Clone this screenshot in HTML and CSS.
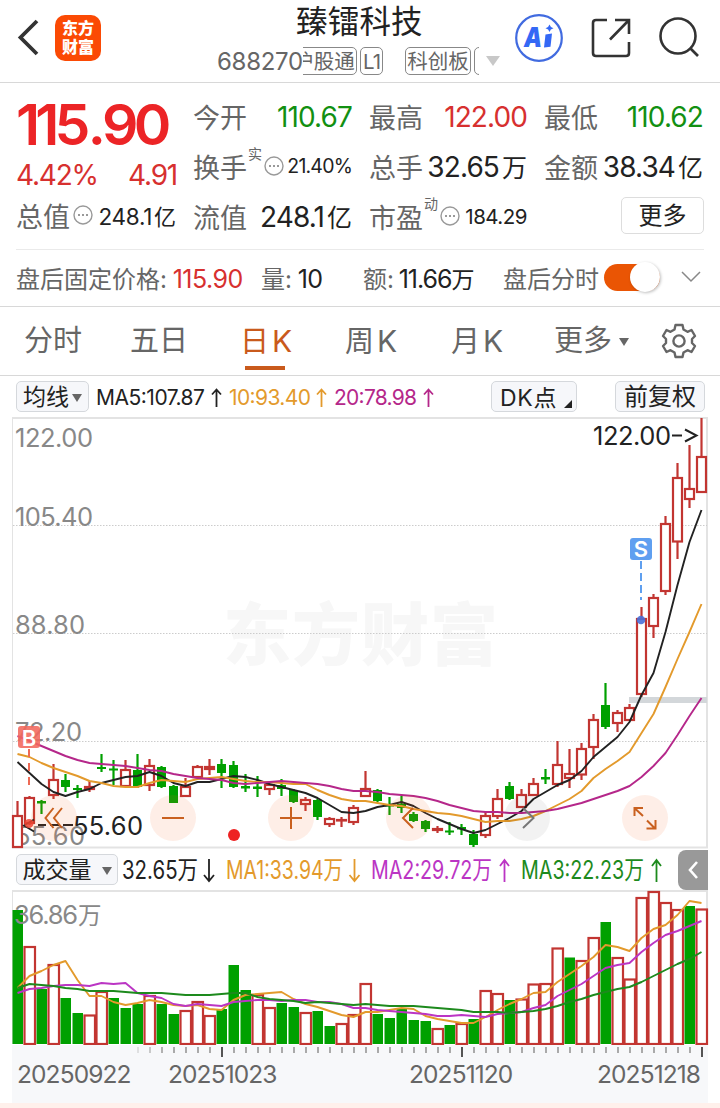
FILE: index.html
```html
<!DOCTYPE html>
<html lang="zh-CN">
<head>
  <meta charset="UTF-8">
  <title>臻镭科技 688270</title>
  <link rel="stylesheet" href="styles.css">
</head>
<body>
  <!-- 顶部导航 -->
  <header class="app-header">
    <svg class="back" width="24" height="40" viewBox="0 0 24 40"><path d="M21 4 L4.500 20.500 L21 37" fill="none" stroke="#333" stroke-width="3.800"/></svg>
    <div class="logo"><span>东方</span><span>财富</span></div>
    <div class="stock">
      <div class="stock-name">臻镭科技</div>
      <div class="stock-sub">
        <span class="stock-code">688270</span>
        <div class="badges">
          <span class="badge first">沪股通</span>
          <span class="badge l1">L1</span>
          <span class="badge board">科创板</span>
          <span class="badge last">融</span>
        </div>
        <span class="tri-light"></span>
      </div>
    </div>
    <div class="header-icons">
      <svg width="50" height="50" viewBox="0 0 50 50">
        <circle cx="25" cy="25" r="22.800" fill="none" stroke="#416be0" stroke-width="2.200"/>
        <text x="10" y="34" class="ai-text" textLength="18" lengthAdjust="spacingAndGlyphs">A</text>
        <path d="M31.500 21.500 L38 20.500 L36.500 33.800 L30 34.500 Z" fill="#3468f5"/>
        <path d="M35.500 11.500 Q36.200 14.300 39.500 15.200 Q36.200 16 35.500 19 Q34.800 16 31.500 15.200 Q34.800 14.300 35.500 11.500 Z" fill="#3468f5"/>
      </svg>
      <svg width="42" height="42" viewBox="0 0 42 42" fill="none" stroke="#333" stroke-width="2.600">
        <path d="M17 3 H6 Q3 3 3 6 V36 Q3 39 6 39 H36 Q39 39 39 36 V25"/>
        <path d="M25 3 H39 V17 M38 4 L20 22.500"/>
      </svg>
      <svg width="42" height="42" viewBox="0 0 42 42" fill="none" stroke="#333" stroke-width="2.600">
        <circle cx="20" cy="19" r="17.500"/>
        <path d="M32 31 L40 39"/>
      </svg>
    </div>
  </header>

  <!-- 行情数据 -->
  <section class="quote">
    <div class="quote-main">
      <div class="price">115<span class="dot">.</span>90</div>
      <div class="change"><span>4.42%</span><span>4.91</span></div>
      <div class="cell last-row"><label>总值</label><svg class="dots" viewBox="0 0 20 20"><circle cx="10" cy="10" r="9"/><path d="M5 10h2M9 10h2M13 10h2"/></svg><span class="val small">248.1<i>亿</i></span></div>
    </div>
    <div class="quote-grid">
      <div class="cell"><label>今开</label><span class="val green">110.67</span></div>
      <div class="cell"><label>最高</label><span class="val red">122.00</span></div>
      <div class="cell"><label>最低</label><span class="val green">110.62</span></div>
      <div class="cell"><label>换手<sup>实</sup></label><svg class="dots" viewBox="0 0 20 20"><circle cx="10" cy="10" r="9"/><path d="M5 10h2M9 10h2M13 10h2"/></svg><span class="val tiny rate">21.40%</span></div>
      <div class="cell"><label>总手</label><span class="val">32.65<i>万</i></span></div>
      <div class="cell"><label>金额</label><span class="val">38.34<i>亿</i></span></div>
      <div class="cell"><label>流值</label><span class="val">248.1<i>亿</i></span></div>
      <div class="cell"><label>市盈<sup>动</sup></label><svg class="dots" viewBox="0 0 20 20"><circle cx="10" cy="10" r="9"/><path d="M5 10h2M9 10h2M13 10h2"/></svg><span class="val tiny">184.29</span></div>
      <div class="cell"><button class="more-btn">更多</button></div>
    </div>
  </section>

  <!-- 盘后固定价格 -->
  <section class="after">
    <span class="after-price">盘后固定价格: <b class="red">115.90</b></span>
    <span class="after-vol">量: <b>10</b></span>
    <span class="after-amt">额: <b>11.66<i>万</i></b></span>
    <span class="after-label">盘后分时</span>
    <span class="toggle"><span class="knob"></span></span>
    <svg width="20" height="12" viewBox="0 0 20 12"><path d="M1 1 L10 10 L19 1" fill="none" stroke="#888" stroke-width="1.500"/></svg>
  </section>

  <!-- 周期切换 -->
  <nav class="tabs">
    <span class="tab">分时</span>
    <span class="tab">五日</span>
    <span class="tab active">日<em>K</em></span>
    <span class="tab k">周<em>K</em></span>
    <span class="tab k">月<em>K</em></span>
    <span class="tab more">更多<span class="tri"></span></span>
    <svg class="gear" width="36" height="36" viewBox="0 0 36 36" fill="none" stroke="#666" stroke-width="2.400" stroke-linejoin="round">
      <path d="M14.500 2 H21.500 L22.500 6.500 L26.500 8.800 L30.500 7 L34 13 L31 16 V20 L34 23 L30.500 29 L26.500 27.200 L22.500 29.500 L21.500 34 H14.500 L13.500 29.500 L9.500 27.200 L5.500 29 L2 23 L5 20 V16 L2 13 L5.500 7 L9.500 8.800 L13.500 6.500 Z"/>
      <circle cx="18" cy="18" r="5.600"/>
    </svg>
  </nav>

  <!-- 均线 -->
  <div class="legend ma-legend">
    <button class="chip ma-chip">均线<span class="tri"></span></button>
    <svg class="ma-text" width="350" height="40" viewBox="92 377 350 40">
      <g class="num">
        <text x="96" y="405" textLength="109" fill="#222">MA5:107.87</text>
        <text x="229" y="405" textLength="82" fill="#e39a2c">10:93.40</text>
        <text x="334" y="405" textLength="83" fill="#b5278a">20:78.98</text>
      </g>
      <g fill="none" stroke-width="1.800">
        <path d="M216.500 407 V389.500 M212 394.500 L216.500 389.500 L221 394.500" stroke="#222"/>
        <path d="M321.500 407 V389.500 M317 394.500 L321.500 389.500 L326 394.500" stroke="#e39a2c"/>
        <path d="M428.500 407 V389.500 M424 394.500 L428.500 389.500 L433 394.500" stroke="#b5278a"/>
      </g>
    </svg>
    <button class="chip dk-chip">DK点<span class="corner"></span></button>
    <button class="chip fq-chip">前复权</button>
  </div>

  <!-- K线图 -->
  <svg class="chart" width="720" height="432" viewBox="0 417 720 432">
    <text class="watermark" x="223" y="660" textLength="275">东方财富</text>
    <path class="frame" d="M12 418 H708 M12 847.500 H708 M707 418 V848"/>
    <path class="frame thin" d="M12.500 418 V848"/>
    <path class="grid-line" d="M13 525.500 H707 M13 633.500 H707 M13 741.500 H707"/>
    <rect x="629" y="697" width="78" height="6" fill="#d3d7da"/>
    <g class="scale">
      <text x="15" y="447" textLength="78">122.00</text>
      <text x="15" y="526" textLength="78">105.40</text>
      <text x="15" y="634" textLength="70">88.80</text>
      <text x="15" y="741" textLength="67">72.20</text>
      <text x="15" y="845" textLength="70">55.60</text>
    </g>
    <g id="candles"></g>
    <g id="price-lines"></g>
    <path d="M34 819.500 L24 825.500 L34 831.500 M38 825 H46 M50 825 H59 M63 825 H73" fill="none" stroke="#222" stroke-width="1.800"/>
    <text class="mark" x="73" y="835" textLength="70">55.60</text>
    <text class="mark" x="593" y="445" textLength="78">122.00</text>
    <path d="M672 435.500 H682 M685 429.500 L696.500 435.500 L685 441.500" fill="none" stroke="#222" stroke-width="2"/>
    <!-- 买卖点 -->
    <path d="M29 749 V790" stroke="#ee6a55" stroke-width="2" stroke-dasharray="8 6"/>
    <circle cx="29" cy="823.500" r="4.500" fill="#ee4433" opacity="0.85"/>
    <rect x="18" y="726" width="22" height="22" rx="3" fill="#f2685c" opacity="0.88"/>
    <text class="tag" x="29" y="745.500">B</text>
    <path d="M641 561 V600" stroke="#5f9fef" stroke-width="2" stroke-dasharray="8 4"/>
    <circle cx="641" cy="620" r="4.300" fill="#4a6fd8" opacity="0.9"/>
    <rect x="630" y="538" width="22" height="22" rx="3" fill="#5f9ff0"/>
    <text class="tag" x="641" y="557">S</text>
    <!-- 操作按钮 -->
    <g class="ctrl">
      <circle cx="54" cy="818" r="23"/><circle cx="173" cy="818" r="23"/><circle cx="291" cy="818" r="23"/>
      <circle cx="409" cy="818" r="23"/><circle class="off" cx="527" cy="818" r="23"/><circle cx="645" cy="818" r="23"/>
      <path d="M53.500 808 L45.500 818 L53.500 828 M62 808 L54 818 L62 828"/>
      <path d="M162 818 H184"/>
      <path d="M280 818 H302 M291 807 V829"/>
      <path d="M413 808 L403 818 L413 828"/>
      <path class="off" d="M523 808 L533.500 818 L523 828"/>
      <path d="M634.500 816 V808 H643 M635 808.500 L643 816 M647 820.500 L655 828.500 M655.500 820 V828.500 H646.500"/>
    </g>
    <circle cx="234" cy="835" r="6" fill="#ee2222"/>
  </svg>

  <!-- 成交量 -->
  <div class="legend vol-legend">
    <button class="chip vol-chip">成交量<span class="tri"></span></button>
    <svg class="vol-text" width="558" height="41" viewBox="120 849 558 41">
      <g class="num">
        <text x="122" y="879" textLength="76" lengthAdjust="spacingAndGlyphs" fill="#222">32.65万</text>
        <text x="226" y="879" textLength="117" lengthAdjust="spacingAndGlyphs" fill="#e39a2c">MA1:33.94万</text>
        <text x="371" y="879" textLength="121" lengthAdjust="spacingAndGlyphs" fill="#bb35c4">MA2:29.72万</text>
        <text x="521" y="879" textLength="123" lengthAdjust="spacingAndGlyphs" fill="#1d8a1d">MA3:22.23万</text>
      </g>
      <g fill="none" stroke-width="1.800">
        <path d="M209 859 V881 M204 875 L209 881 L214 875" stroke="#222"/>
        <path d="M354.500 859 V881 M349.500 875 L354.500 881 L359.500 875" stroke="#e39a2c"/>
        <path d="M504.500 882 V860 M500 866 L504.500 860 L509 866" stroke="#bb35c4"/>
        <path d="M656.500 882 V860 M652 866 L656.500 860 L661 866" stroke="#1d8a1d"/>
      </g>
    </svg>
    <button class="side-btn"><svg width="12" height="20" viewBox="0 0 12 20"><path d="M10 2 L3 10 L10 18" fill="none" stroke="#fff" stroke-width="2.600"/></svg></button>
  </div>
  <svg class="chart" width="720" height="155" viewBox="0 890 720 155">
    <path class="frame" d="M12 891 H708 M707 891 V1044"/>
    <path class="frame thin" d="M12.500 891 V1044"/>
    <g id="volumes"></g>
    <g class="scale"><text x="14" y="924" textLength="64">36.86</text><text class="unit" x="78" y="924">万</text></g>
    <g id="volume-lines"></g>
  </svg>

  <!-- 日期轴 -->
  <div class="axis">
    <svg id="ticks" width="696" height="14" viewBox="12 1045 696 14"></svg>
    <div class="dates">
      <span>20250922</span><span>20251023</span><span>20251120</span><span>20251218</span>
    </div>
  </div>
  <footer class="bottom-bar"></footer>
  <script src="chart.js"></script>
</body>
</html>
```

FILE: styles.css
```css
* { box-sizing: border-box; }
body { margin: 0; width: 720px; height: 1108px; overflow: hidden; background: #fff; color: #222; font-family: Inter, "Noto Sans CJK SC", sans-serif; font-weight: 400; }
svg { display: block; flex: none; }
button { font-family: inherit; margin: 0; padding: 0; color: #222; }
i, em { font-style: normal; letter-spacing: 0; }
.red { color: #d7302f; }
.green { color: #129012; }

/* 顶部导航 */
.app-header { display: flex; height: 83px; border-bottom: 1px solid #d8d8d8; padding-left: 16px; }
.back { margin-top: 17px; }
.logo { display: flex; flex-direction: column; align-items: center; justify-content: center; width: 46px; height: 46px; margin: 15px 0 0 15px; border-radius: 10px; background: #fb4a04; color: #fff; font-size: 16px; line-height: 19px; font-weight: 900; }
.stock { width: 290px; margin-left: 116px; padding-top: 3px; }
.stock-name { height: 41px; line-height: 38px; padding-left: 79px; font-size: 31.500px; letter-spacing: 0.200px; white-space: nowrap; }
.stock-sub { display: flex; height: 33px; align-items: center; }
.stock-code { width: 86px; font-size: 24px; letter-spacing: -0.300px; line-height: 28px; padding-top: 2px; color: #666; }
.badges { display: flex; width: 176px; height: 28px; overflow: hidden; }
.badge { flex: none; height: 28px; border: 1.500px solid #888; border-radius: 5px; color: #666; font-size: 20.500px; line-height: 27px; text-align: center; white-space: nowrap; }
.badge.first { width: 66px; margin-left: -12px; }
.badge.l1 { width: 23px; margin-left: 3px; letter-spacing: -1px; }
.badge.board { width: 66px; margin-left: 22px; }
.badge.last { width: 30px; margin-left: 3px; }
.tri-light { margin-left: 7px; border: 7px solid transparent; border-top: 10px solid #c8c8c8; border-bottom: 0; }
.header-icons { display: flex; gap: 26px; padding: 13px 0 0 7px; }
.header-icons svg + svg { margin-top: 4px; }
.ai-text { font: italic 900 27px Inter, sans-serif; fill: #3468f5; }

/* 行情 */
.quote { display: flex; height: 167px; margin: 0 16px; border-bottom: 1px solid #eaeaea; }
.quote-main { width: 177px; padding-right: 17px; }
.price { height: 75px; line-height: 84px; font-size: 57px; font-weight: 600; letter-spacing: -4.800px; color: #ec2426; white-space: nowrap; }
.price .dot { margin: 0 1px 0 2px; }
.change { display: flex; justify-content: space-between; height: 34px; line-height: 34px; font-size: 28px; letter-spacing: -1.200px; color: #d7302f; margin-right: -1px; }
.quote-grid { display: grid; grid-template-columns: 159px 158px 159px; grid-template-rows: 49px 50px 50px; column-gap: 17px; padding-top: 9px; }
.cell { display: flex; align-items: center; white-space: nowrap; }
.last-row { height: 46px; }
.cell label { position: relative; font-size: 27px; color: #666; }
.cell sup { position: absolute; left: 55px; top: -1px; font-size: 14px; line-height: 16px; }
.dots { width: 20px; height: 20px; fill: none; stroke: #999; stroke-width: 1.400; }
.dots path { stroke-width: 2; }
.quote-main .dots { margin-left: 3px; }
.quote-grid .dots { margin-left: 17px; }
.val { margin-left: auto; font-size: 28px; letter-spacing: -0.900px; }
.val i { margin-left: 3px; font-size: 25px; }
.val.small { font-size: 22.500px; letter-spacing: -0.300px; }
.val.small i { margin-left: 2px; font-size: 22px; }
.val.tiny { font-size: 20.500px; letter-spacing: -0.500px; }
.val.rate { font-size: 19.500px; letter-spacing: -0.800px; }
.more-btn { width: 83px; height: 37px; margin: -1px -1px 0 auto; border: 1px solid #ddd; border-radius: 5px; background: #fff; font-size: 24px; line-height: 33px; }

/* 盘后 */
.after { display: flex; align-items: center; height: 57px; padding: 0 0 2px 16px; border-bottom: 1px solid #d8d8d8; font-size: 24px; color: #666; white-space: nowrap; }
.after b { font-size: 25px; font-weight: 400; letter-spacing: -0.500px; color: #222; }
.after b.red { color: #d7302f; }
.after b i { font-size: 23px; }
.after-price { width: 245px; word-spacing: -1px; }
.after-vol { width: 102px; word-spacing: -1px; }
.after-amt { width: 140px; word-spacing: -2px; }
.after-amt b { letter-spacing: -1px; }
.after-label { width: 101px; }
.toggle { display: flex; justify-content: flex-end; align-items: center; width: 56px; height: 27px; border-radius: 14px; background: #ea5504; margin-right: 21px; }
.knob { width: 30px; height: 30px; border-radius: 50%; background: #fff; box-shadow: 1px 1px 3px rgba(0,0,0,0.25); }

/* 周期 */
.tabs { display: flex; height: 69px; padding-left: 24px; border-bottom: 1px solid #d8d8d8; color: #666; font-size: 29px; }
.tab { width: 106px; height: 63px; line-height: 68px; white-space: nowrap; }
.tab em { margin-left: 3px; font-size: 30px; }
.tab.active { padding-left: 4px; color: #c95a1c; background: linear-gradient(#c95a1c, #c95a1c) 9px 59px / 40px 4px no-repeat; }
.tab.k { padding-left: 3px; }
.tab.more { width: 100px; }
.gear { margin: 16px 0 0 7px; }
.tri { display: inline-block; border: 5px solid transparent; border-top: 8px solid #666; border-bottom: 0; }
.tab .tri { margin: 0 0 5px 7px; }

/* 指标条 */
.legend { display: flex; align-items: center; height: 41px; padding-left: 16px; }
.chip { flex: none; height: 31px; border: 1px solid #d5d8dc; border-radius: 5px; background: #f6f7fa; font-size: 23px; line-height: 28px; white-space: nowrap; }
.chip .tri { margin: 0 0 3px 3px; }
.ma-chip { width: 73px; }
.ma-text { margin-left: 3px; }
.ma-text .num { font: 21px Inter, sans-serif; }
.dk-chip { display: flex; align-items: center; width: 86px; margin-left: 49px; padding: 3px 0 0 8px; letter-spacing: 0.700px; }
.corner { align-self: flex-end; margin: 0 0 3px 7px; border-left: 8px solid transparent; border-bottom: 8px solid #222; }
.fq-chip { width: 90px; margin-left: 38px; font-size: 24px; }
.vol-chip { width: 102px; }
.vol-chip .tri { margin-left: 10px; }
.vol-text { margin-left: 2px; }
.vol-text .num { font: 25px Inter, "Noto Sans CJK SC", sans-serif; }
.side-btn { display: flex; align-items: center; justify-content: center; width: 30px; height: 40px; border: 0; border-radius: 8px 0 0 8px; background: #999; }

/* 图表 */
.frame { fill: none; stroke: #e3e3e3; stroke-width: 2; }
.frame.thin { stroke-width: 1; }
.grid-line { fill: none; stroke: #ccc; stroke-dasharray: 1.500 1.500; }
.watermark { font: 900 68px "Noto Sans CJK SC", sans-serif; fill: #f7f7f7; }
.scale text { font-size: 25.500px; fill: #888; }
.scale .unit { font-size: 23.500px; }
.mark { font-size: 25.500px; fill: #222; }
.tag { font: 600 22px Inter, sans-serif; fill: #fff; text-anchor: middle; }
.up { fill: #fff; stroke: #c23531; stroke-width: 2.200; }
.down { fill: #00a000; }
.wick-up { stroke: #c23531; stroke-width: 2.200; }
.wick-down { stroke: #00a000; stroke-width: 2.200; }
.line { fill: none; stroke-width: 1.900; stroke-linejoin: round; }
.ctrl circle { fill: rgba(244,102,38,0.11); }
.ctrl circle.off { fill: rgba(0,0,0,0.05); }
.ctrl path { fill: none; stroke: #c9601f; stroke-width: 2; }
.ctrl path.off { stroke: #777; }

/* 日期轴 */
.axis { width: 696px; height: 58px; margin-left: 12px; background: #f7f8fa; padding-top: 1px; }
.dates { display: flex; padding-left: 5px; color: #666; font-size: 24.500px; line-height: 28px; letter-spacing: -0.900px; }
.dates span:nth-child(1) { width: 151px; }
.dates span:nth-child(2) { width: 241px; }
.dates span:nth-child(3) { width: 188px; }
.bottom-bar { height: 5px; background: #fff0eb; }
```

FILE: chart.js
```js
// 每根K线: [方向, 实体上沿, 实体下沿, 最高, 最低, 成交量上沿, 成交量方向]
var bars = [
  [1, 815, 848, 801, 848, 910, 0], [1, 797, 824, 796, 825, 946, 1], [0, 801, 803.5, 800, 814, 989, 0],
  [1, 779, 796, 764, 799, 964, 1], [0, 780, 787, 774, 792, 998, 0], [0, 788, 790, 785, 798, 1013, 0],
  [1, 786, 790, 781, 792, 1014.5, 1], [0, 767, 769, 754, 772, 991, 1], [0, 768.5, 770.5, 760, 785, 998, 0],
  [1, 769, 787, 760, 787, 1008, 0], [0, 770, 787, 754, 788, 1004, 0], [1, 765, 786, 759, 791, 995, 1],
  [0, 767, 787, 766, 788, 1004, 0], [0, 786, 803, 785, 803, 1014, 0], [1, 786, 797, 778, 797, 1010, 1],
  [1, 766, 778, 765, 778, 1001, 1], [1, 766, 770, 759, 775, 1015, 1], [0, 764, 773, 759, 788, 1009, 0],
  [0, 765, 787, 761, 788, 965, 0], [0, 786, 788.5, 774, 792, 990, 0], [0, 786.5, 789, 776, 797, 994, 1],
  [1, 784, 790, 784, 795, 1007, 1], [0, 785, 789, 779, 796, 1003, 0], [0, 790, 802, 789, 803, 1007, 0],
  [1, 799, 805, 797, 811, 1012, 1], [0, 800, 817, 799, 820, 1011, 0], [1, 818, 825, 817, 827, 1026, 0],
  [1, 819, 821, 817, 827, 1023, 1], [1, 807, 823, 805, 825, 1014, 1], [1, 788, 797, 771, 797, 983, 1],
  [0, 790, 801, 789, 802, 1014, 0], [0, 804.5, 806.5, 797, 815, 1018, 0], [0, 804, 808, 796, 813, 1009, 0],
  [0, 814, 821, 812, 822, 1020, 0], [0, 821, 829, 820, 832, 1021, 0], [1, 828, 831, 826, 833, 1028, 1],
  [0, 830.5, 832.5, 822, 835, 1025, 0], [0, 827, 829.5, 824, 835, 1023, 1], [0, 834, 845, 830, 847, 1019, 0],
  [1, 815, 836, 812, 838, 990, 1], [1, 798, 817, 789, 819, 993, 1], [0, 786, 799, 782, 800, 1000, 0],
  [1, 794, 808, 789, 808, 998.5, 1], [1, 783, 796, 778, 796, 983.5, 1], [0, 777, 779.5, 769, 784, 983, 1],
  [1, 764, 785, 741, 787, 947.5, 1], [1, 773, 779, 749, 788, 957.5, 0], [1, 748, 775.5, 743, 780, 960, 1],
  [1, 719, 748, 714, 759, 937, 1], [0, 705, 727, 683, 729, 922, 0], [1, 712, 724, 710, 732, 957, 1],
  [1, 707, 721, 704, 721, 978.5, 1], [1, 618, 695, 607, 697, 897, 1], [1, 597, 627, 594, 638, 891, 1],
  [1, 523, 592, 516, 595, 902, 1], [1, 477, 542.5, 463, 559, 909, 1], [1, 488, 500, 445, 508, 906, 0],
  [1, 456, 493, 418, 493, 908.5, 1]
];

var priceMa = {
  '#222': [762, 773, 784, 792, 796, 792, 789, 783, 780, 777, 776, 772, 776, 783, 786, 782, 782, 779, 776, 777, 780, 784, 787, 790, 793, 798, 805, 812, 813, 811, 807, 805, 802, 806, 813, 819, 824, 829, 833, 830, 824, 818, 811, 799, 792, 785, 780, 771, 757, 747, 737, 722, 695, 673, 632, 585, 542, 510],
  '#e39a2c': [754, 757, 763, 768, 772, 776, 781, 783, 786, 787, 787, 783, 780, 781, 782, 779, 778, 777, 779, 781, 782, 782, 783, 784, 784, 790, 795, 799, 801, 801, 803, 805, 806, 809, 811, 813, 814, 816, 819, 822, 821, 821, 819, 816, 811, 805, 799, 791, 778, 769, 761, 752, 733, 714, 687, 659, 632, 604],
  '#b5278a': [736, 741, 746, 751, 756, 760, 763, 764, 765, 766, 768, 770, 771, 774, 776, 778, 779, 780, 783, 784, 783, 782, 781, 782, 783, 784, 786, 789, 791, 791, 792, 794, 795, 796, 798, 801, 805, 808, 811, 812, 812, 813, 813, 812, 811, 809, 806, 803, 799, 795, 791, 786, 777, 766, 753, 735, 716, 698]
};

var volumeMa = {
  '#e39a2c': [988, 976, 971, 965, 961, 980, 996, 996, 1002, 1005, 1003, 1000, 1002, 1005, 1006, 1005, 1009, 1010, 1000, 995, 994, 993, 992, 999, 1004, 1007, 1011, 1015, 1017, 1012, 1012, 1010, 1008, 1009, 1016, 1019, 1021, 1023, 1023, 1017, 1010, 1004, 999, 993, 992, 982, 974, 966, 957, 945, 947, 951, 938, 929, 925, 915, 901, 903],
  '#bb35c4': [993, 989, 988, 986, 985, 985, 986, 983, 984, 983, 993, 996, 998, 1004, 1006, 1004, 1005, 1006, 1002, 1001, 1000, 1000, 1001, 1000, 1000, 1002, 1002, 1004, 1008, 1008, 1010, 1011, 1012, 1013, 1014, 1016, 1016, 1015, 1016, 1017, 1014, 1013, 1012, 1008, 1005, 996, 990, 984, 976, 968, 965, 963, 952, 943, 935, 931, 926, 921],
  '#1d8a1d': [988, 984, 985, 986, 988, 989, 991, 991, 991, 992, 993, 993, 993, 994, 995, 995, 995, 994, 993, 993, 997, 999, 1000, 1001, 1003, 1002, 1003, 1004, 1005, 1004, 1005, 1006, 1006, 1006, 1007, 1008, 1009, 1010, 1012, 1012, 1012, 1013, 1012, 1011, 1009, 1006, 1002, 999, 995, 992, 989, 987, 982, 976, 970, 964, 959, 952]
};

function centerX(i) { return 17.5 + i * 12; }

function add(parent, tag, attrs) {
  var el = document.createElementNS('http://www.w3.org/2000/svg', tag);
  for (var key in attrs) el.setAttribute(key, attrs[key]);
  parent.appendChild(el);
}

function drawLines(parent, series) {
  Object.keys(series).forEach(function(color) {
    var points = series[color].map(function(y, i) { return centerX(i) + ',' + y; });
    add(parent, 'polyline', { 'class': 'line', points: points.join(' '), stroke: color });
  });
}

var candles = document.getElementById('candles');
var volumes = document.getElementById('volumes');
bars.forEach(function(b, i) {
  var x = centerX(i);
  add(candles, 'line', { 'class': b[0] ? 'wick-up' : 'wick-down', x1: x, x2: x, y1: b[3], y2: b[4] });
  if (b[0]) {
    add(candles, 'rect', { 'class': 'up', x: x - 4.5, y: b[1] + 1, width: 9, height: Math.max(b[2] - b[1] - 2, 0.5) });
  } else {
    add(candles, 'rect', { 'class': 'down', x: x - 4.5, y: b[1], width: 9, height: b[2] - b[1] });
  }
  if (b[6]) {
    add(volumes, 'rect', { 'class': 'up', x: x - 5, y: b[5] + 1, width: 10.5, height: 1043 - b[5] });
  } else {
    add(volumes, 'rect', { 'class': 'down', x: x - 5, y: b[5], width: 10.5, height: 1044 - b[5] });
  }
});

drawLines(document.getElementById('price-lines'), priceMa);
drawLines(document.getElementById('volume-lines'), volumeMa);

// 刻度
var ticks = document.getElementById('ticks');
for (var i = 10; i < 58; i++) {
  var major = i === 17 || i === 37 || i === 57;
  add(ticks, 'line', { x1: centerX(i) + 0.5, x2: centerX(i) + 0.5, y1: 1046, y2: major ? 1056 : 1052, stroke: major ? '#555' : '#aaa', 'stroke-width': 2, opacity: i < 13 ? 0.3 * (i - 9) : 1 });
}
```
